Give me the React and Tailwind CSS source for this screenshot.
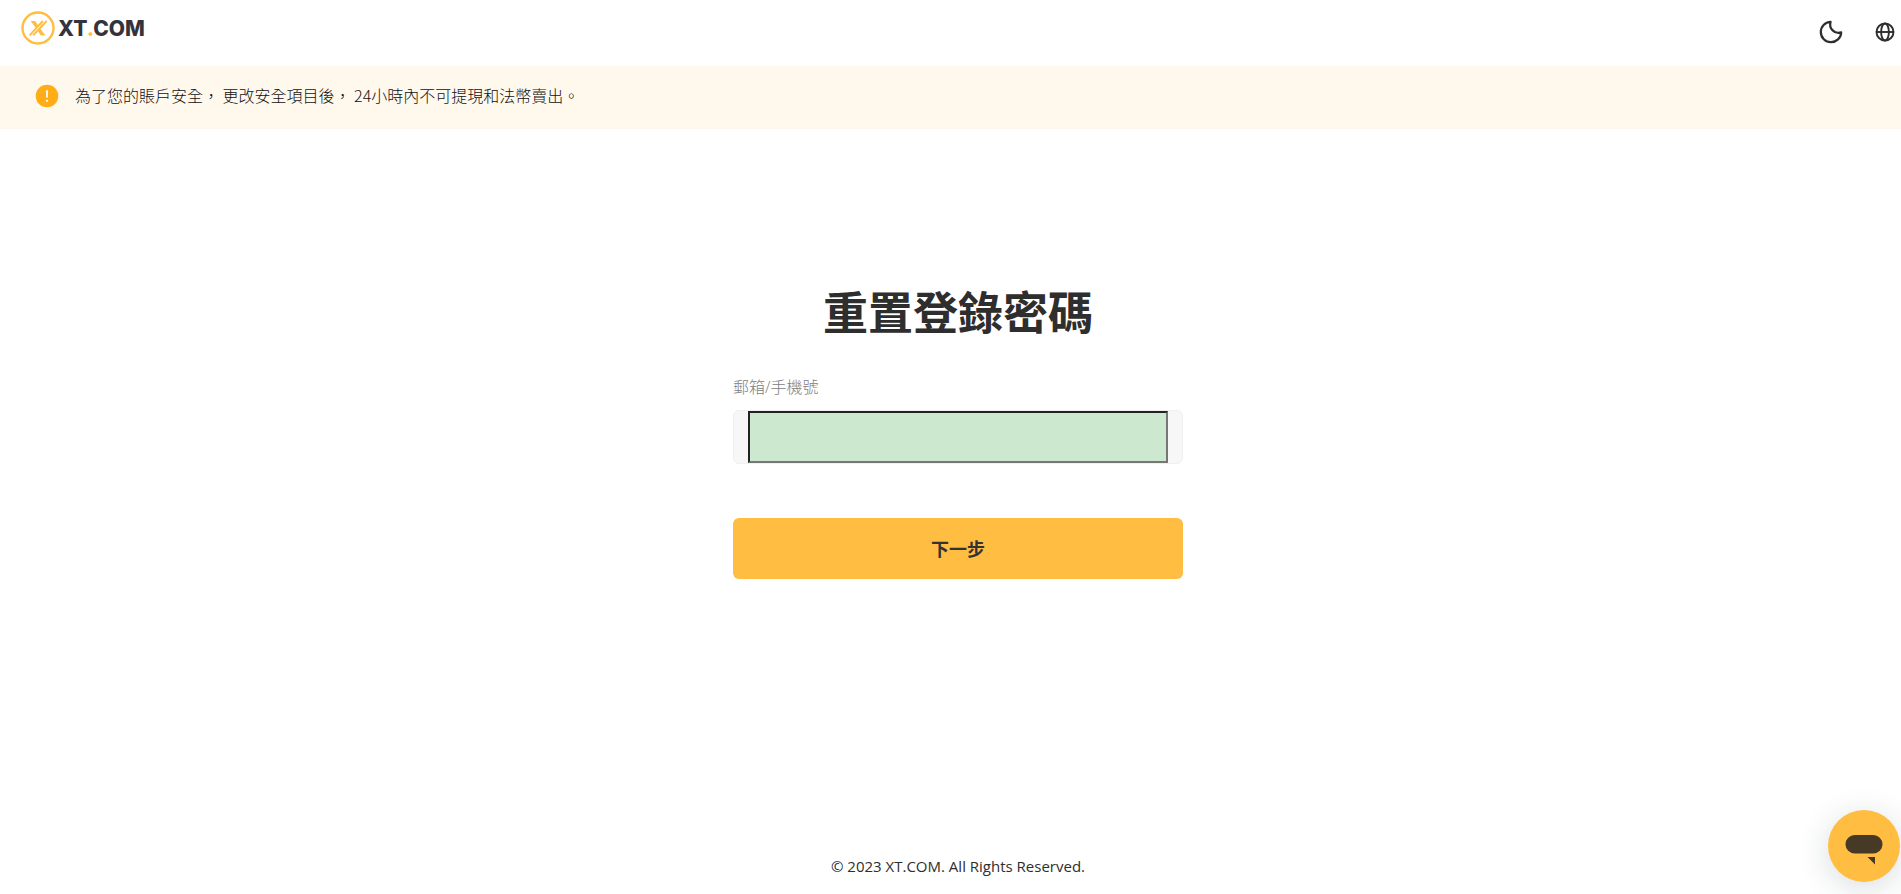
import React, { useState } from 'react';

const LogoMark = () => (
  <svg viewBox="0 0 34 34" className="w-[34px] h-[34px]" fill="none" aria-hidden="true">
    <circle cx="17" cy="17" r="15.5" stroke="#ffbd42" strokeWidth="2.4" />
    <path d="M9.6 10h4.6l3 4.6-2.3 2.5z" fill="#ffbd42" />
    <path d="M24.4 24.4h-4.6l-3-4.6 2.3-2.5z" fill="#ffbd42" />
    <g stroke="#ffbd42">
      <path d="M21.8 10L8.6 24.4" strokeWidth="1.9" />
      <path d="M25.6 10L12.2 24.4" strokeWidth="1.9" />
    </g>
  </svg>
);

const MoonIcon = () => (
  <svg viewBox="0 0 24 24" className="w-6 h-6" fill="none" stroke="currentColor" strokeWidth="2.2" strokeLinejoin="round">
    <path d="M11.6 1.8A10.2 10.2 0 1 0 22.2 12.4A8.4 8.4 0 0 1 11.6 1.8Z" />
  </svg>
);

const GlobeIcon = () => (
  <svg viewBox="0 0 20 20" className="w-5 h-5" fill="none" stroke="currentColor" strokeWidth="1.9">
    <circle cx="10" cy="10" r="8.5" />
    <ellipse cx="10" cy="10" rx="3.9" ry="8.5" />
    <path d="M1.5 10h17" />
  </svg>
);

const WarningIcon = () => (
  <svg viewBox="0 0 24 24" className="w-6 h-6 shrink-0" aria-hidden="true">
    <circle cx="12" cy="12" r="11.3" fill="#ffad17" />
    <path d="M12 6.2v7.4" stroke="#fff" strokeWidth="1.8" />
    <circle cx="12" cy="16.8" r="1.1" fill="#fff" />
  </svg>
);

const ChatIcon = () => (
  <svg viewBox="0 0 38 30" className="w-[38px] h-[30px]" fill="#463926">
    <rect x="0.5" y="0" width="37" height="18.5" rx="9.2" />
    <path d="M22.5 22H30v7.5Z" />
  </svg>
);

const ResetPassword = () => {
  const [account, setAccount] = useState('');

  return (
    <div className="min-h-screen flex flex-col bg-white text-[#2e2e2e] font-['Open_Sans','Noto_Sans_CJK_TC',sans-serif]">
      {/* Header */}
      <header className="h-[66px] flex items-start justify-between pl-[21px] pr-1.5">
        <a href="#" className="flex items-center gap-[3px] pt-[11px]">
          <LogoMark />
          <span className="pt-0.5 font-[Inter,sans-serif] font-extrabold text-[21px] leading-8 text-[#33333b]">
            XT<span className="text-[#ffbd42]">.</span>COM
          </span>
        </a>
        <div className="flex items-center gap-8 pt-5">
          <button type="button" aria-label="Dark mode">
            <MoonIcon />
          </button>
          <button type="button" aria-label="Language">
            <GlobeIcon />
          </button>
        </div>
      </header>

      {/* Security notice */}
      <div className="h-[63px] flex items-center gap-4 pl-[35px] pr-9 pb-1 bg-[#fff8ec]">
        <WarningIcon />
        <p className="pb-0.5 text-base leading-6 font-light text-[#111] font-['Noto_Sans_CJK_TC',sans-serif]">
          為了您的賬戶安全， 更改安全項目後， 24小時內不可提現和法幣賣出。
        </p>
      </div>

      <main className="flex-1 flex flex-col items-center pl-[15px] pt-[152px]">
        <form className="w-full max-w-[450px] flex flex-col" onSubmit={(e) => e.preventDefault()}>
          <h1 className="text-[45px] leading-[64px] font-bold text-center">重置登錄密碼</h1>
          <label htmlFor="account" className="mt-[30px] mb-[11px] text-base leading-6 font-light text-[#808080]">
            郵箱/手機號
          </label>
          <div className="h-[54px] flex px-3.5 rounded-md border border-[#f0f0f0] bg-[#f7f7f7]">
            <input
              id="account"
              type="text"
              value={account}
              onChange={(e) => setAccount(e.target.value)}
              className="w-full px-2 border-2 border-t-[#222] border-l-[#222] border-r-[#767676] border-b-[#767676] bg-[#cce8cf] outline-none"
            />
          </div>
          <button
            type="submit"
            className="mt-[54px] h-[61px] rounded-md bg-[#ffbd42] text-lg font-bold text-[#333] cursor-pointer"
          >
            下一步
          </button>
        </form>
      </main>

      <footer className="pl-[15px] pb-4 text-center text-[15px] leading-6">© 2023 XT.COM. All Rights Reserved.</footer>

      <button
        type="button"
        aria-label="Chat"
        className="fixed right-px bottom-3 w-[72px] h-[72px] pt-2 flex items-center justify-center rounded-full bg-[#ffbd42] shadow-[0_6px_32px_rgba(0,40,50,0.16)]"
      >
        <ChatIcon />
      </button>
    </div>
  );
};

export default ResetPassword;
